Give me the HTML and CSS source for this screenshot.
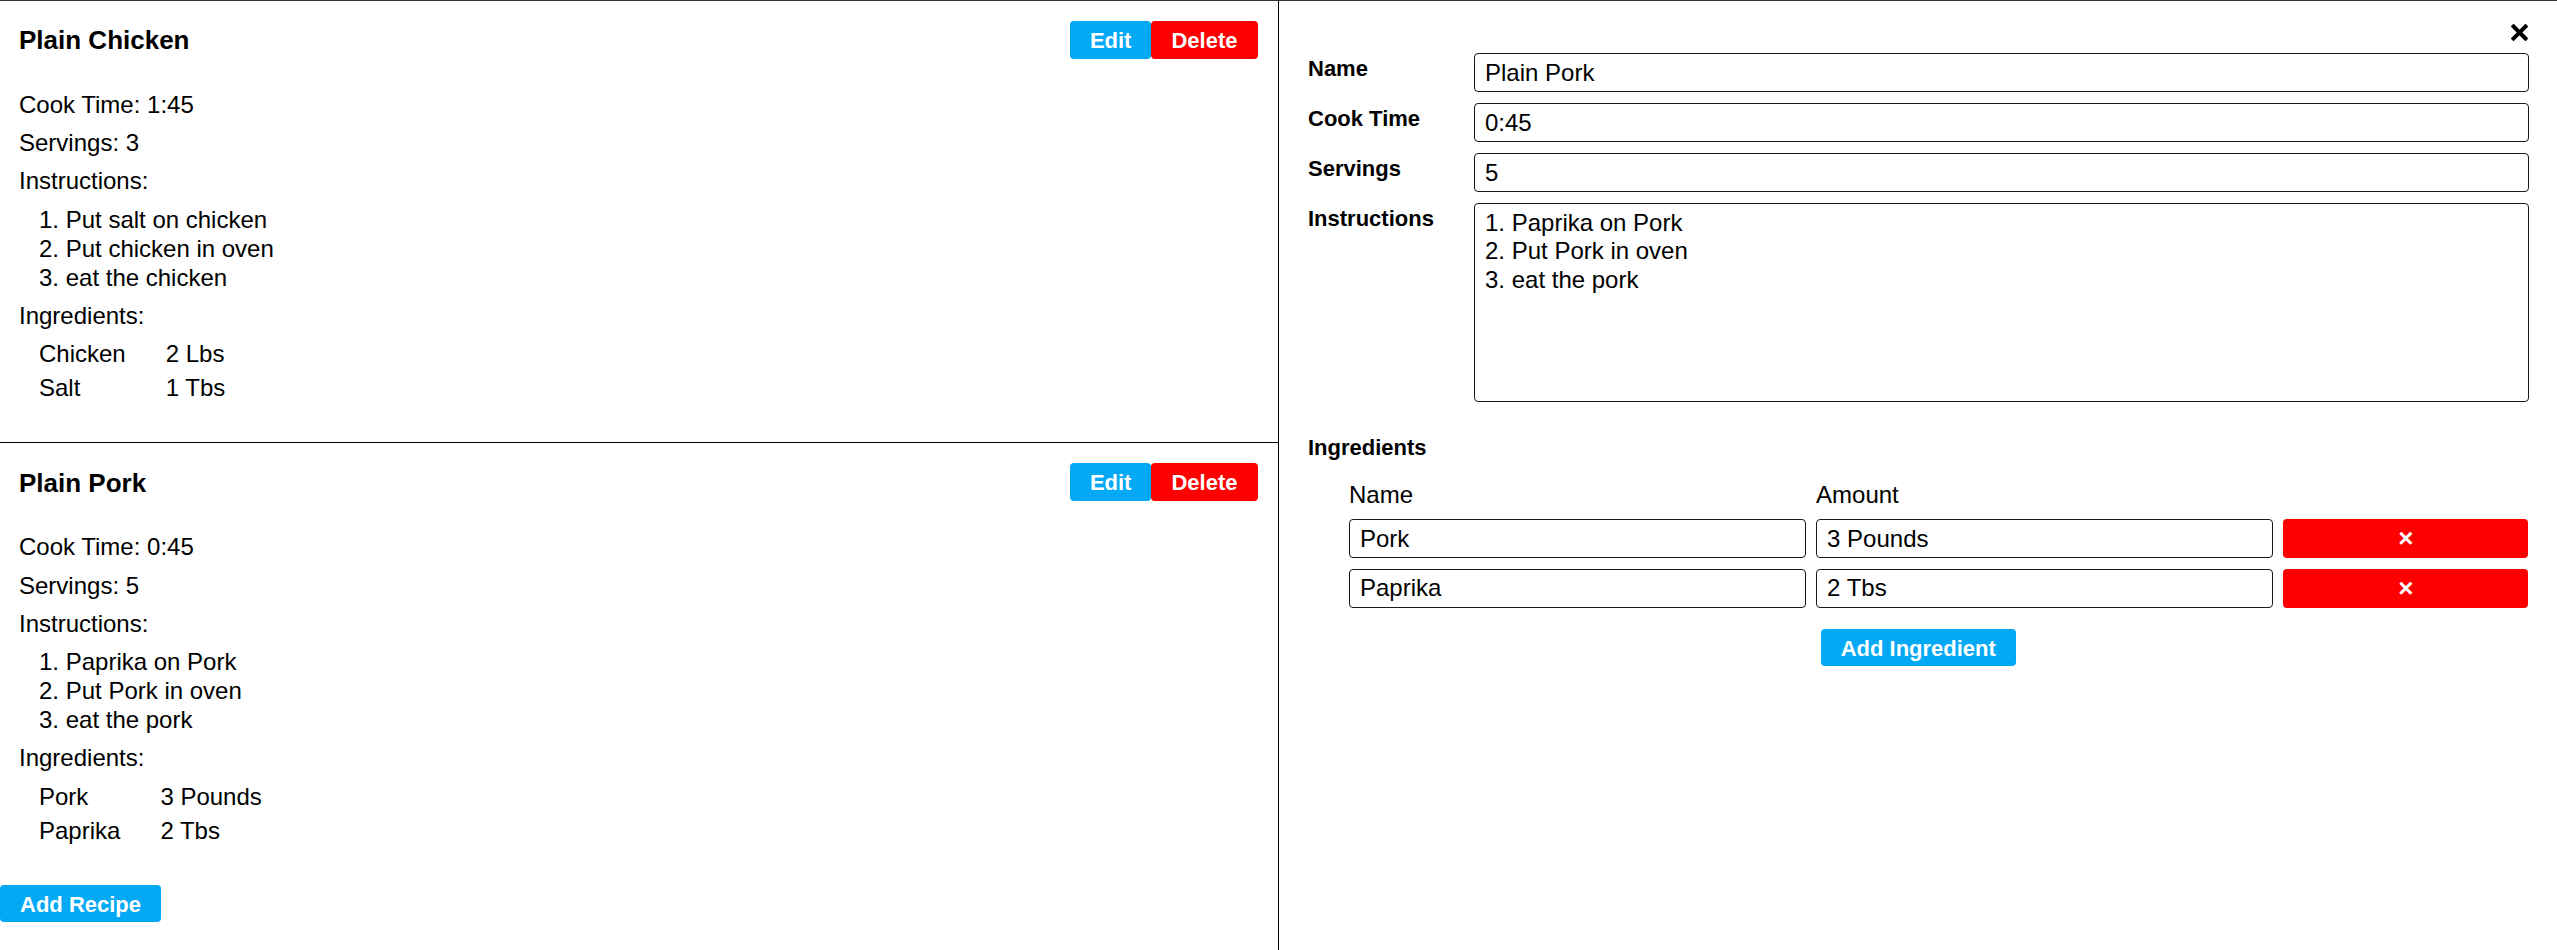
FILE: index.html
```html
<!DOCTYPE html>
<html lang="en">
<head>
<meta charset="utf-8">
<title>Recipes</title>
<link rel="stylesheet" href="styles.css">
</head>
<body>
<div class="app">
  <section class="recipes">
    <article class="recipe">
      <header class="recipe-head">
        <h3 class="recipe-title">Plain Chicken</h3>
        <div class="actions"><button class="btn btn-blue">Edit</button><button class="btn btn-red">Delete</button></div>
      </header>
      <p class="line">Cook Time: 1:45</p>
      <p class="line">Servings: 3</p>
      <p class="line">Instructions:</p>
      <ol class="steps">
        <li>Put salt on chicken</li>
        <li>Put chicken in oven</li>
        <li>eat the chicken</li>
      </ol>
      <p class="line">Ingredients:</p>
      <div class="ing-list">
        <span>Chicken</span><span>2 Lbs</span>
        <span>Salt</span><span>1 Tbs</span>
      </div>
    </article>
    <article class="recipe">
      <header class="recipe-head">
        <h3 class="recipe-title">Plain Pork</h3>
        <div class="actions"><button class="btn btn-blue">Edit</button><button class="btn btn-red">Delete</button></div>
      </header>
      <p class="line">Cook Time: 0:45</p>
      <p class="line">Servings: 5</p>
      <p class="line">Instructions:</p>
      <ol class="steps">
        <li>Paprika on Pork</li>
        <li>Put Pork in oven</li>
        <li>eat the pork</li>
      </ol>
      <p class="line">Ingredients:</p>
      <div class="ing-list">
        <span>Pork</span><span>3 Pounds</span>
        <span>Paprika</span><span>2 Tbs</span>
      </div>
    </article>
    <button class="btn btn-blue add-recipe">Add Recipe</button>
  </section>

  <section class="editor">
    <div class="close-row">
      <button class="close" aria-label="Close">
        <svg width="17" height="17" viewBox="0 0 17 17"><path d="M2.5 2.5 L14.5 14.5 M14.5 2.5 L2.5 14.5" stroke="#000" stroke-width="4" stroke-linecap="square" fill="none"/></svg>
      </button>
    </div>
    <div class="form-grid">
      <label class="field-label">Name</label>
      <input class="field" type="text" value="Plain Pork">
      <label class="field-label">Cook Time</label>
      <input class="field" type="text" value="0:45">
      <label class="field-label">Servings</label>
      <input class="field" type="text" value="5">
      <label class="field-label">Instructions</label>
      <textarea class="field area">1. Paprika on Pork
2. Put Pork in oven
3. eat the pork</textarea>
    </div>
    <h4 class="ing-heading">Ingredients</h4>
    <div class="ing-grid">
      <span class="col-head">Name</span><span class="col-head">Amount</span><span></span>
      <input class="field" type="text" value="Pork"><input class="field" type="text" value="3 Pounds"><button class="btn btn-red del">×</button>
      <input class="field" type="text" value="Paprika"><input class="field" type="text" value="2 Tbs"><button class="btn btn-red del">×</button>
    </div>
    <div class="add-row"><button class="btn btn-blue">Add Ingredient</button></div>
  </section>
</div>
</body>
</html>
```

FILE: styles.css
```css
* { box-sizing: border-box; }

html, body {
  margin: 0;
  padding: 0;
  background: #fff;
}

body {
  font-family: "Liberation Sans", Arial, sans-serif;
  font-size: 24px;
  color: #000;
}

.app {
  display: grid;
  grid-template-columns: 1fr 1fr;
  height: 950px;
  border-top: 1px solid #333;
}

/* ---------- left: recipe list ---------- */
.recipes {
  border-right: 1px solid #000;
  min-width: 0;
}

.recipe {
  padding: 20px 20px 40px 19px;
}

.recipe + .recipe {
  border-top: 1px solid #000;
}

.recipe-head {
  display: flex;
  justify-content: space-between;
  align-items: center;
  height: 37.5px;
  margin-bottom: 31.4px;
}

.recipe-title {
  margin: 0;
  padding-top: 2px;
  font-size: 26px;
  line-height: 29px;
  font-weight: bold;
}

.actions {
  display: flex;
}

.btn {
  font-family: "Liberation Sans", Arial, sans-serif;
  font-size: 22px;
  font-weight: bold;
  color: #fff;
  border: none;
  border-radius: 4px;
  height: 37.5px;
  padding: 3px 20px 0;
  line-height: 34.5px;
  cursor: pointer;
}

.btn-blue { background: #03a9f4; }
.btn-red { background: #fe0000; }

.line {
  margin: 0 0 9.3px;
  line-height: 29px;
}

.steps {
  margin: 0 0 9.3px;
  padding-left: 20px;
  list-style-position: inside;
  line-height: 29px;
}

.ing-list {
  display: grid;
  grid-template-columns: auto auto;
  justify-content: start;
  column-gap: 40px;
  row-gap: 5px;
  margin: 0.7px 0 0 20px;
  line-height: 29px;
}

.add-recipe {
  display: block;
}

/* ---------- right: editor ---------- */
.editor {
  padding: 23px 28.5px 0 29.5px;
  min-width: 0;
}

.close-row {
  display: flex;
  justify-content: flex-end;
  margin-bottom: 12px;
}

.close {
  width: 17px;
  height: 17px;
  padding: 0;
  margin-right: 1px;
  border: none;
  background: none;
  cursor: pointer;
}

.close svg { display: block; }

.form-grid {
  display: grid;
  grid-template-columns: 166px 1fr;
  row-gap: 11px;
  align-items: start;
}

.field-label {
  font-size: 22px;
  font-weight: bold;
  line-height: 25px;
  padding-top: 3.3px;
}

.field {
  font-family: "Liberation Sans", Arial, sans-serif;
  font-size: 24px;
  color: #000;
  height: 39px;
  width: 100%;
  min-width: 0;
  padding: 0 10px;
  border: 1px solid #1a1a1a;
  border-radius: 4px;
  background: #fff;
  outline: none;
}

.area {
  height: 199px;
  padding: 5px 10px;
  line-height: 28.3px;
  resize: none;
  display: block;
}

.ing-heading {
  margin: 32.6px 0 0;
  font-size: 22px;
  font-weight: bold;
  line-height: 25px;
}

.ing-grid {
  display: grid;
  grid-template-columns: 456fr 456fr 245fr;
  grid-template-rows: 28px 39px 39px;
  column-gap: 10.5px;
  row-gap: 10.5px;
  margin: 21.1px 0 0 41px;
}

.col-head {
  line-height: 28px;
}

.del {
  height: 39px;
  padding: 0;
  font-size: 26px;
  line-height: 39px;
  text-align: center;
}

.add-row {
  margin-top: 21px;
  text-align: center;
}
```
